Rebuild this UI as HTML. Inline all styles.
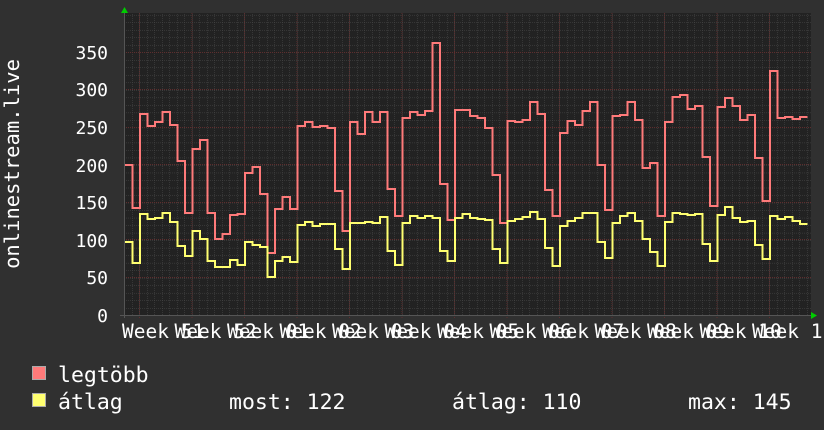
<!DOCTYPE html>
<html><head><meta charset="utf-8"><style>
html,body{margin:0;padding:0;background:#303030;}
svg{display:block}
text{font-family:"DejaVu Sans Mono","Liberation Mono",monospace;fill:#fff}
</style></head><body>
<svg width="824" height="430" viewBox="0 0 824 430" xmlns="http://www.w3.org/2000/svg">
<defs>
<pattern id="mv" x="124.5" y="0" width="7.5" height="430" patternUnits="userSpaceOnUse">
<line x1="0" y1="0" x2="0" y2="430" stroke="#4c4c4c" stroke-width="1" stroke-dasharray="1,1"/>
</pattern>
<pattern id="mh" x="0" y="315.5" width="824" height="7.514" patternUnits="userSpaceOnUse">
<line x1="0" y1="0" x2="824" y2="0" stroke="#4c4c4c" stroke-width="1" stroke-dasharray="1,1"/>
</pattern>
</defs>
<rect x="0" y="0" width="824" height="430" fill="#303030"/>
<rect x="124" y="13" width="687" height="302" fill="#222"/>
<rect x="124" y="13" width="687" height="302" fill="url(#mv)"/>
<rect x="124" y="13" width="687" height="302" fill="url(#mh)"/>
<g stroke="#5e2e2e" stroke-width="1" stroke-dasharray="1,1">
<line x1="124" x2="811" y1="277.5" y2="277.5"/><line x1="124" x2="811" y1="239.5" y2="239.5"/>
<line x1="124" x2="811" y1="202.5" y2="202.5"/><line x1="124" x2="811" y1="164.5" y2="164.5"/>
<line x1="124" x2="811" y1="127.5" y2="127.5"/><line x1="124" x2="811" y1="89.5" y2="89.5"/>
<line x1="124" x2="811" y1="52.5" y2="52.5"/>
<line y1="13" y2="318" x1="139.5" x2="139.5"/><line y1="13" y2="318" x1="192" x2="192"/>
<line y1="13" y2="318" x1="244.5" x2="244.5"/><line y1="13" y2="318" x1="297" x2="297"/>
<line y1="13" y2="318" x1="349.5" x2="349.5"/><line y1="13" y2="318" x1="402" x2="402"/>
<line y1="13" y2="318" x1="454.5" x2="454.5"/><line y1="13" y2="318" x1="507" x2="507"/>
<line y1="13" y2="318" x1="559.5" x2="559.5"/><line y1="13" y2="318" x1="612" x2="612"/>
<line y1="13" y2="318" x1="664.5" x2="664.5"/><line y1="13" y2="318" x1="717" x2="717"/>
<line y1="13" y2="318" x1="769.5" x2="769.5"/>
</g>
<line x1="120" y1="315.5" x2="815" y2="315.5" stroke="#555" stroke-width="1"/>
<line x1="124.5" y1="10" x2="124.5" y2="318" stroke="#555" stroke-width="1"/>
<polygon points="121,13 124.5,7 128,13" fill="#0c0"/>
<polygon points="811,312 817,315.5 811,319" fill="#0c0"/>
<path fill="none" stroke="#ff7a7a" stroke-width="2" d="M125 165H132.5V208H140V114H147.5V126H155V122H162.5V112H170V125H177.5V161H185V213H192.5V149H200V140H207.5V213H215V239H222.5V234H230V215H237.5V214H245V173H252.5V167H260V194H267.5V253H275V209H282.5V197H290V209H297.5V126H305V122H312.5V127H320V126H327.5V128H335V191H342.5V231H350V122H357.5V134H365V112H372.5V122H380V112H387.5V189H395V216H402.5V118H410V112H417.5V115H425V111H432.5V43H440V184H447.5V220H455V110H462.5V110H470V116H477.5V118H485V128H492.5V175H500V223H507.5V121H515V122H522.5V120H530V102H537.5V114H545V190H552.5V216H560V133H567.5V121H575V125H582.5V111H590V102H597.5V165H605V210H612.5V116H620V115H627.5V102H635V120H642.5V168H650V163H657.5V216H665V122H672.5V97H680V95H687.5V109H695V106H702.5V157H710V206H717.5V107H725V98H732.5V106H740V120H747.5V115H755V158H762.5V201H770V71H777.5V118H785V117H792.5V119H800V117H807.5"/>
<path fill="none" stroke="#ffff70" stroke-width="2" d="M125 242H132.5V263H140V214H147.5V219H155V218H162.5V213H170V222H177.5V246H185V256H192.5V231H200V239H207.5V261H215V267H222.5V267H230V260H237.5V265H245V242H252.5V245H260V247H267.5V277H275V261H282.5V257H290V262H297.5V225H305V222H312.5V226H320V224H327.5V224H335V249H342.5V269H350V223H357.5V223H365V222H372.5V223H380V217H387.5V251H395V265H402.5V223H410V216H417.5V218H425V216H432.5V218H440V251H447.5V261H455V218H462.5V214H470V218H477.5V219H485V220H492.5V249H500V263H507.5V221H515V219H522.5V217H530V212H537.5V219H545V248H552.5V266H560V226H567.5V221H575V218H582.5V213H590V213H597.5V242H605V258H612.5V223H620V216H627.5V213H635V221H642.5V239H650V252H657.5V266H665V222H672.5V213H680V214H687.5V215H695V214H702.5V244H710V261H717.5V215H725V207H732.5V218H740V222H747.5V221H755V245H762.5V259H770V216H777.5V219H785V217H792.5V221H800V224H807.5"/>
<g font-size="18" text-anchor="end">
<text x="108" y="322">0</text><text x="108" y="284">50</text><text x="108" y="247">100</text>
<text x="108" y="209">150</text><text x="108" y="172">200</text><text x="108" y="134">250</text>
<text x="108" y="96">300</text><text x="108" y="59">350</text>
</g>
<text font-size="20.5" transform="translate(19,164) rotate(-90)" text-anchor="middle">onlinestream.live</text>
<g font-size="19.5">
<text x="122" y="338">Week 51</text><text x="174.5" y="338">Week 52</text><text x="227" y="338">Week 01</text>
<text x="279.5" y="338">Week 02</text><text x="332" y="338">Week 03</text><text x="384.5" y="338">Week 04</text>
<text x="437" y="338">Week 05</text><text x="489.5" y="338">Week 06</text><text x="542" y="338">Week 07</text>
<text x="594.5" y="338">Week 08</text><text x="647" y="338">Week 09</text><text x="699.5" y="338">Week 10</text>
<text x="752" y="338">Week 11</text>
</g>
<rect x="32.5" y="366.5" width="13" height="13" fill="#ff7a7a" stroke="#aaa"/>
<rect x="32.5" y="393.5" width="13" height="13" fill="#ffff70" stroke="#aaa"/>
<g font-size="21.5">
<text x="58" y="382">legtöbb</text>
<text x="58" y="409">átlag</text>
<text x="229" y="409">most: 122</text>
<text x="452" y="409">átlag: 110</text>
<text x="688" y="409">max: 145</text>
</g>
</svg>
</body></html>
